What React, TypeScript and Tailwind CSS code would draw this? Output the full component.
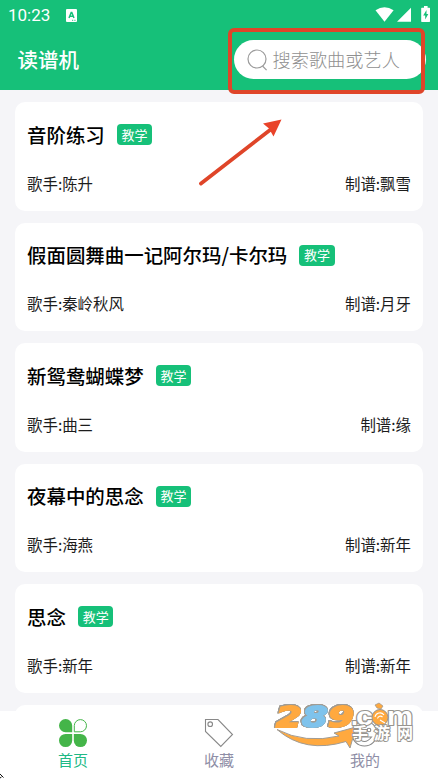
import type { ReactNode } from 'react'

type Song = { title: string; singer: string; author: string }

const songs: Song[] = [
  { title: '音阶练习', singer: '陈升', author: '飘雪' },
  { title: '假面圆舞曲一记阿尔玛/卡尔玛', singer: '秦岭秋风', author: '月牙' },
  { title: '新鸳鸯蝴蝶梦', singer: '曲三', author: '缘' },
  { title: '夜幕中的思念', singer: '海燕', author: '新年' },
  { title: '思念', singer: '新年', author: '新年' },
  { title: '', singer: '', author: '' },
]

function StatusBar() {
  return (
    <div className="flex h-[30px] items-center pl-2 pr-2 text-white">
      <span className="font-[Roboto] text-[17px] leading-none">10:23</span>
      <svg className="ml-[16px]" width="11" height="13" viewBox="0 0 11 13">
        <rect width="11" height="13" rx="1" fill="#fff" />
        <path d="M3 9 L5.2 3.4 H5.8 L8 9 M3.8 7.2 H7.2" stroke="#16c079" strokeWidth="1.5" fill="none" />
        <path d="M6 11.3h1.2M8.3 11.3h1.2" stroke="#16c079" strokeWidth="0.9" />
      </svg>
      <svg className="mb-[2px] ml-auto" width="55" height="17" viewBox="0 0 55 17" fill="#fff">
        <path d="M0.5 4.2 Q9.5 -1.8 18.6 4.2 L9.5 15.7 Z" />
        <path d="M36 1.7 V15.7 H22 Z" />
        <path d="M49 0 h3.6 v1.7 h2 q0.4 0 0.4 0.6 v13 q0 0.7 -0.6 0.7 h-7.6 q-0.6 0 -0.6 -0.7 v-13 q0 -0.6 0.6 -0.6 h2.2 z" />
        <path d="M51.5 4 L48.2 9.4 H50.2 V13.5 L53.3 8 H51.5 Z" fill="#16c079" />
      </svg>
    </div>
  )
}

function Header() {
  return (
    <header className="h-[90px] shrink-0 bg-[#16c079]">
      <StatusBar />
      <div className="flex h-[59px] items-center justify-between pl-[17.5px] pr-[12.5px]">
        <h1 className="text-[20.5px] font-medium leading-none text-white">读谱机</h1>
        <div className="flex h-[39px] w-[192px] items-center rounded-full bg-white pl-[13px]">
          <svg width="21" height="22" viewBox="0 0 21 22" fill="none" stroke="#9b9b9b" strokeWidth="1.2">
            <circle cx="10" cy="10" r="9" />
            <path d="M15.5 17 L19.6 21.2" />
          </svg>
          <span className="ml-[5px] text-[18.2px] font-light leading-none text-[#909090]">搜索歌曲或艺人</span>
        </div>
      </div>
    </header>
  )
}

function SongCard({ title, singer, author }: Song) {
  return (
    <div className="h-[108.5px] shrink-0 rounded-[10px] bg-white px-3">
      {title && (
        <>
          <div className="flex h-[65px] items-center">
            <h2 className="text-[19.45px] font-medium leading-none text-black">{title}</h2>
            <span className="ml-3 flex h-[21px] w-[35.5px] items-center justify-center rounded-[4px] bg-[#16c079] pb-px text-[13px] leading-none text-white">
              教学
            </span>
          </div>
          <div className="flex h-[33px] items-center justify-between text-[15.45px] leading-none text-[#1c1c1c]">
            <span>歌手:{singer}</span>
            <span>制谱:{author}</span>
          </div>
        </>
      )}
    </div>
  )
}

function NavItem({ label, active, children }: { label: string; active?: boolean; children: ReactNode }) {
  return (
    <div className="flex flex-1 flex-col items-center pt-[7px]">
      {children}
      <span className={active ? 'mt-[3px] text-[15px] leading-[18px] text-[#20b985]' : 'mt-[3px] text-[15px] leading-[18px] text-[#8e8ea6]'}>
        {label}
      </span>
    </div>
  )
}

function BottomNav() {
  return (
    <nav className="flex h-[68px] shrink-0 bg-white">
      <NavItem label="首页" active>
        <svg width="30" height="30" viewBox="0 0 30 30" fill="#44b549">
          <path d="M14.2 14.2 H7.6 A6.6 6.6 0 1 1 14.2 7.6 Z" />
          <path d="M16.3 13.8 V7.6 A6.1 6.1 0 1 1 22.4 13.8 Z" fill="#fff" stroke="#44b549" />
          <path d="M14.2 15.9 H7.6 A6.6 6.6 0 1 0 14.2 22.5 Z" />
          <path d="M15.8 15.9 H22.4 A6.6 6.6 0 1 1 15.8 22.5 Z" />
        </svg>
      </NavItem>
      <NavItem label="收藏">
        <svg width="30" height="30" viewBox="0 0 30 30" fill="none" stroke="#888" strokeWidth="1.1">
          <path d="M1.5 1.5 H14 L28.5 16.5 L16.8 28.5 L1.5 13.5 Z" />
          <circle cx="6.2" cy="6.2" r="2.3" />
        </svg>
      </NavItem>
      <NavItem label="我的">
        <svg width="30" height="30" viewBox="0 0 30 30" fill="none" stroke="#888" strokeWidth="1.1">
          <circle cx="14.5" cy="15.5" r="12.5" />
          <path d="M7.5 19 Q14.5 28 21.5 19 Z" />
          <circle cx="19" cy="12" r="1.8" />
          <circle cx="10" cy="12" r="1.8" />
        </svg>
      </NavItem>
    </nav>
  )
}

function Watermark() {
  return (
    <svg className="absolute left-[270px] top-[690px]" width="148" height="64" viewBox="0 -10 148 64">
      <path d="M7 29.5 Q35 44 69 36 L64 33 L86 27 L80 48 L76 41.5 Q35 54 7 29.5 Z" fill="#ffa93f" stroke="#a19c94" />
      <g
        className="[filter:drop-shadow(0.8px_0_0_#a19c94)_drop-shadow(-0.8px_0_0_#a19c94)_drop-shadow(0_0.8px_0_#a19c94)_drop-shadow(0_-0.8px_0_#a19c94)]"
        fontFamily="'DejaVu Sans', sans-serif"
        fontWeight="700"
        fontStyle="italic"
        fontSize="29"
        strokeWidth="1.8"
      >
        <text x="6" y="27.3" fill="#ffa93f" stroke="#ffa93f" textLength="26" lengthAdjust="spacingAndGlyphs">2</text>
        <text x="32" y="27.3" fill="#7fc3ec" stroke="#7fc3ec" textLength="26" lengthAdjust="spacingAndGlyphs">8</text>
        <text x="58" y="27.3" fill="#ffa93f" stroke="#ffa93f" textLength="26" lengthAdjust="spacingAndGlyphs">9</text>
      </g>
      <g fontFamily="'Liberation Sans', sans-serif" fontWeight="700" fontSize="25" fill="#fff" stroke="#98958f" strokeWidth="2.2" paintOrder="stroke" strokeLinejoin="round">
        <text x="81" y="24.5">.</text>
        <text x="86" y="24.5" textLength="17" lengthAdjust="spacingAndGlyphs">c</text>
        <text x="117" y="24.5" textLength="26" lengthAdjust="spacingAndGlyphs">m</text>
      </g>
      <path d="M105 5 l4 -2 4 3 -2 3 -4 -1 z" fill="#ffa93f" stroke="#98958f" strokeWidth="0.7" />
      <circle cx="110" cy="17.5" r="8" fill="#ffa93f" stroke="#98958f" />
      <path d="M105 17 a5 5 0 0 1 9 -2 M107.5 18.5 a3 3 0 0 1 5 -1.5 M110 20 l5 3" fill="none" stroke="#fff" strokeWidth="1.1" />
      <g fontFamily="'Noto Sans CJK SC', sans-serif" fontWeight="700" fontSize="16" fill="#fff" stroke="#98958f" strokeWidth="2" paintOrder="stroke" strokeLinejoin="round">
        <text x="82" y="38.5">手</text>
        <text x="104" y="38.5">游</text>
        <text x="127" y="38.5">网</text>
      </g>
    </svg>
  )
}

export default function App() {
  return (
    <div className="relative flex h-[779px] w-[438px] flex-col overflow-hidden bg-[#f5f5f8] font-['Noto_Sans_CJK_SC',sans-serif]">
      <Header />
      <main className="flex min-h-0 flex-1 flex-col gap-3 overflow-hidden px-[15px] pt-3">
        {songs.map((song, i) => (
          <SongCard key={i} {...song} />
        ))}
      </main>
      <BottomNav />

      {/* Callout around the search box */}
      <div className="absolute left-[228px] top-[28px] h-[66px] w-[197px] rounded-[6px] border-4 border-[#df4529]" />
      <svg className="absolute left-[196px] top-[116px]" width="90" height="72" viewBox="0 0 90 72">
        <path d="M5 67.5 L74 14" stroke="#df4529" strokeWidth="3.8" strokeLinecap="round" />
        <path d="M85.5 3.5 L67 7.5 L73 12.5 L77.5 20.5 Z" fill="#e9432a" />
      </svg>
      <Watermark />

      {/* Mouse pointer entering from the corner */}
      <svg className="absolute left-0 top-[773px]" width="5" height="6" viewBox="0 0 5 6">
        <path d="M0 1 L3.5 4.5 M0 5 L1.5 4" stroke="#111" fill="none" />
      </svg>
    </div>
  )
}
